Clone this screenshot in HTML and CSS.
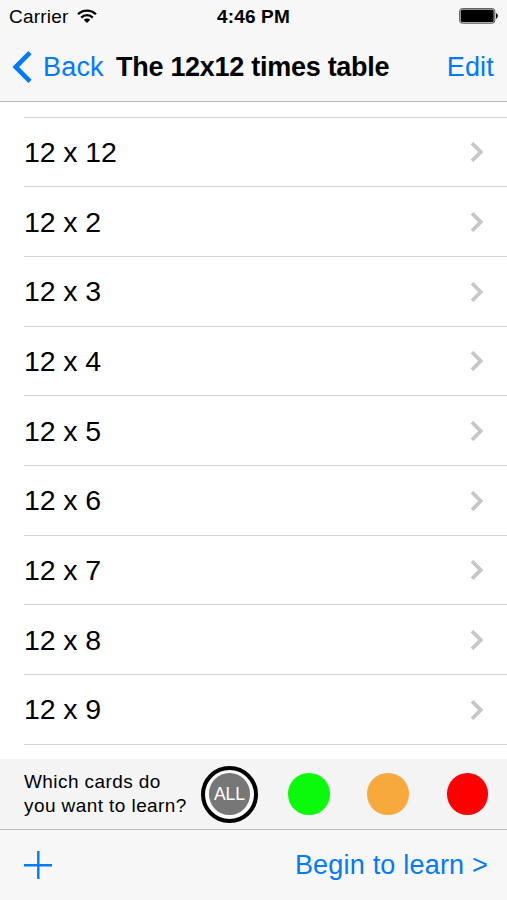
FILE: index.html
```html
<!DOCTYPE html>
<html lang="en">
<head>
<meta charset="utf-8">
<title>The 12x12 times table</title>
<link rel="stylesheet" href="styles.css">
</head>
<body>
<div class="app">
  <header class="top">
    <div class="status">
      <div class="carrier"><span class="carrier-name">Carrier</span>
        <svg class="wifi" width="20" height="15" viewBox="0 0 20 15" fill="none" stroke="#000" stroke-width="2.2"><path d="M1 5.3a12.7 12.7 0 0 1 18 0M4.2 8.6a8.2 8.2 0 0 1 11.6 0"/><path d="M10 14L6.8 10.8a4.6 4.6 0 0 1 6.4 0z" fill="#000" stroke="none"/></svg>
      </div>
      <span class="time">4:46 PM</span>
      <svg class="battery" width="40" height="16" viewBox="0 0 40 16"><rect x=".6" y=".6" width="35.2" height="14.6" rx="2.6" fill="#ccc" stroke="#555" stroke-width="1"/><rect x="1.8" y="1.8" width="32.8" height="12.2" rx="1.5"/><path d="M37 5.3c2.4.8 2.4 4.6 0 5.4z"/></svg>
    </div>
    <nav class="nav">
      <a class="back"><svg width="20" height="32" viewBox="0 0 20 32" fill="none" stroke="#007aff" stroke-width="4.6"><path d="M18 1.7L3.7 16 18 30.3"/></svg><span class="back-label">Back</span></a>
      <h1 class="title">The 12x12 times table</h1>
      <a class="edit">Edit</a>
    </nav>
  </header>
  <main class="list">
    <div class="stub"></div>
    <div class="row"><span>12 x 12</span><svg class="chev" viewBox="0 0 14 20"><path d="M2 1.2l8.7 8.8L2 18.8"/></svg></div>
    <div class="row"><span>12 x 2</span><svg class="chev" viewBox="0 0 14 20"><path d="M2 1.2l8.7 8.8L2 18.8"/></svg></div>
    <div class="row"><span>12 x 3</span><svg class="chev" viewBox="0 0 14 20"><path d="M2 1.2l8.7 8.8L2 18.8"/></svg></div>
    <div class="row"><span>12 x 4</span><svg class="chev" viewBox="0 0 14 20"><path d="M2 1.2l8.7 8.8L2 18.8"/></svg></div>
    <div class="row"><span>12 x 5</span><svg class="chev" viewBox="0 0 14 20"><path d="M2 1.2l8.7 8.8L2 18.8"/></svg></div>
    <div class="row"><span>12 x 6</span><svg class="chev" viewBox="0 0 14 20"><path d="M2 1.2l8.7 8.8L2 18.8"/></svg></div>
    <div class="row"><span>12 x 7</span><svg class="chev" viewBox="0 0 14 20"><path d="M2 1.2l8.7 8.8L2 18.8"/></svg></div>
    <div class="row"><span>12 x 8</span><svg class="chev" viewBox="0 0 14 20"><path d="M2 1.2l8.7 8.8L2 18.8"/></svg></div>
    <div class="row"><span>12 x 9</span><svg class="chev" viewBox="0 0 14 20"><path d="M2 1.2l8.7 8.8L2 18.8"/></svg></div>
  </main>
  <section class="filter">
    <p class="question">Which cards do<br>you want to learn?</p>
    <div class="all"><div class="dot gray"><span>ALL</span></div></div>
    <div class="dot green"></div>
    <div class="dot orange"></div>
    <div class="dot red"></div>
  </section>
  <footer class="toolbar">
    <svg width="28" height="28" viewBox="0 0 28 28" stroke="#007aff" stroke-width="2.4"><path d="M14.3 0v28M0 14.3h28"/></svg>
    <a class="begin">Begin to learn &gt;</a>
  </footer>
</div>
</body>
</html>
```
FILE: styles.css
```css
* { box-sizing: border-box; }
body {
  margin: 0;
  background: #fff;
  color: #000;
  font-family: "Liberation Sans", Arial, sans-serif;
}
.app {
  display: flex;
  flex-direction: column;
  width: 507px;
  height: 900px;
  overflow: hidden;
}
.top {
  flex: none;
  height: 102px;
  background: #f7f7f7;
  border-bottom: 1px solid #b9b9b9;
}
.status {
  display: grid;
  grid-template-columns: 1fr auto 1fr;
  align-items: center;
  height: 32px;
  padding: 0 8px 0 9px;
}
.carrier { display: flex; align-items: center; gap: 9px; }
.carrier-name { padding-top: 1px; font-size: 19px; letter-spacing: 0.2px; }
.time {
  margin-right: 1px;
  padding-top: 1px;
  font-size: 19px;
  font-weight: bold;
  letter-spacing: 0.15px;
}
.battery { justify-self: end; }
.nav {
  display: flex;
  align-items: center;
  height: 69px;
  padding: 1px 13px 0 12px;
}
.back { display: flex; align-items: center; gap: 11px; color: #007aff; }
.back-label { width: 60px; font-size: 27px; letter-spacing: 0.2px; }
.title {
  margin: 0 0 0 13px;
  font-size: 27px;
  font-weight: bold;
  letter-spacing: -0.28px;
  white-space: nowrap;
}
.edit { margin-left: auto; color: #007aff; font-size: 27px; letter-spacing: 0.2px; }
.list { flex: none; height: 657px; overflow: hidden; }
.stub { height: 15.5px; margin-left: 24px; border-bottom: 1px solid #d2d2d2; }
.row {
  display: flex;
  align-items: center;
  justify-content: space-between;
  height: 69.7px;
  margin-left: 24px;
  padding: 1px 23px 0 0;
  border-bottom: 1px solid #d2d2d2;
  font-size: 28.5px;
  letter-spacing: -0.1px;
}
.chev {
  width: 14px;
  height: 20px;
  fill: none;
  stroke: #c7c7c7;
  stroke-width: 3.8;
}
.filter {
  flex: none;
  display: flex;
  align-items: center;
  height: 70px;
  padding-left: 24px;
  background: #f4f4f4;
}
.question {
  width: 177px;
  margin: 0;
  font-size: 19px;
  line-height: 24px;
  letter-spacing: 0.42px;
  white-space: nowrap;
}
.all {
  display: flex;
  align-items: center;
  justify-content: center;
  width: 57px;
  height: 57px;
  border: 4.5px solid #000;
  border-radius: 50%;
  background: #fafafa;
}
.dot { width: 41.5px; height: 41.5px; border-radius: 50%; }
.gray {
  display: flex;
  align-items: center;
  justify-content: center;
  padding-top: 1px;
  background: #777;
  color: #fff;
  font-size: 17.5px;
}
.green { margin-left: 30.2px; background: #0bf90b; }
.orange { margin-left: 37.7px; background: #f7a93b; }
.red { margin-left: 37.7px; background: #f00; }
.toolbar {
  flex: none;
  display: flex;
  align-items: center;
  justify-content: space-between;
  height: 71px;
  padding: 0 19px 0 24px;
  background: #f7f7f7;
  border-top: 1px solid #bdbdbd;
}
.begin { padding-top: 1px; color: #007aff; font-size: 27px; letter-spacing: 0.2px; }
```
